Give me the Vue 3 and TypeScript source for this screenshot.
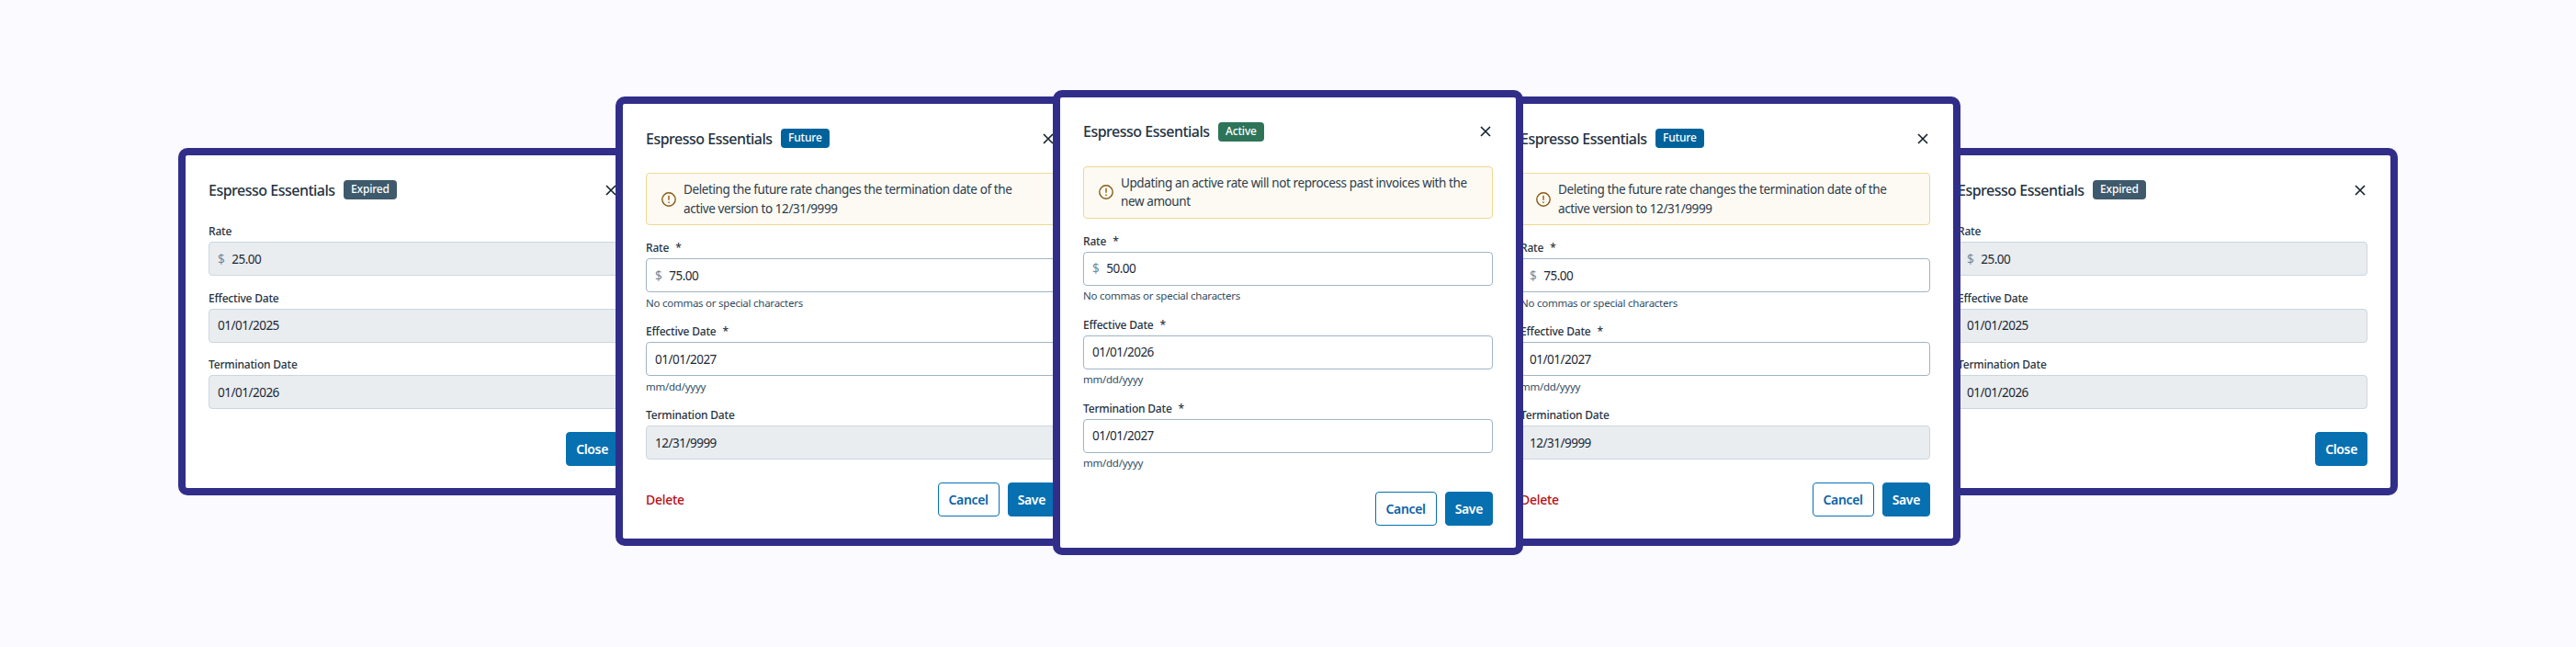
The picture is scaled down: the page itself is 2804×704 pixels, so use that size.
<script setup lang="ts">
interface Field { label: string; value: string; required?: boolean; helper?: string; prefix?: boolean; disabled?: boolean }
interface Card { status: string; tone: string; alert?: string; fields: Field[]; del?: boolean; actions: string[]; cls: string }

const future: Omit<Card, 'cls'> = {
  status: 'Future', tone: 'future',
  alert: 'Deleting the future rate changes the termination date of the active version to 12/31/9999',
  fields: [
    { label: 'Rate', value: '75.00', required: true, helper: 'No commas or special characters', prefix: true },
    { label: 'Effective Date', value: '01/01/2027', required: true, helper: 'mm/dd/yyyy' },
    { label: 'Termination Date', value: '12/31/9999', disabled: true },
  ],
  del: true, actions: ['Cancel', 'Save'],
}
const expired: Omit<Card, 'cls'> = {
  status: 'Expired', tone: 'expired',
  fields: [
    { label: 'Rate', value: '25.00', prefix: true, disabled: true },
    { label: 'Effective Date', value: '01/01/2025', disabled: true },
    { label: 'Termination Date', value: '01/01/2026', disabled: true },
  ],
  actions: ['Close'],
}
const active: Omit<Card, 'cls'> = {
  status: 'Active', tone: 'active',
  alert: 'Updating an active rate will not reprocess past invoices with the new amount',
  fields: [
    { label: 'Rate', value: '50.00', required: true, helper: 'No commas or special characters', prefix: true },
    { label: 'Effective Date', value: '01/01/2026', required: true, helper: 'mm/dd/yyyy' },
    { label: 'Termination Date', value: '01/01/2027', required: true, helper: 'mm/dd/yyyy' },
  ],
  actions: ['Cancel', 'Save'],
}
const cards: Card[] = [
  { ...expired, cls: 'z1' },
  { ...future, cls: 'z2' },
  { ...active, cls: 'z3' },
  { ...future, cls: 'z2' },
  { ...expired, cls: 'z1' },
]
</script>

<template>
  <main class="stage">
    <section v-for="(c, i) in cards" :key="i" class="card" :class="c.cls">
      <header class="head">
        <h2 class="title">Espresso Essentials</h2>
        <span class="badge" :class="c.tone">{{ c.status }}</span>
        <button class="x" type="button" aria-label="Close">
          <svg width="16" height="16" viewBox="0 0 16 16" fill="none" stroke="currentColor" stroke-width="1.6">
            <path d="M3 3l10 10M13 3L3 13" />
          </svg>
        </button>
      </header>
      <div v-if="c.alert" class="alert">
        <svg class="alert-icon" width="16" height="16" viewBox="0 0 16 16" fill="none" stroke="#8a5a12">
          <circle cx="8" cy="8" r="7.2" stroke-width="1.4" />
          <path d="M8 3.8v5" stroke-width="1.4" />
          <path d="M8 10.6v1.5" stroke-width="1.4" />
        </svg>
        <p class="alert-text">{{ c.alert }}</p>
      </div>
      <div class="form">
        <div v-for="f in c.fields" :key="f.label" class="field">
          <div class="label">{{ f.label }}<span v-if="f.required" class="req">*</span></div>
          <div class="input" :class="{ off: f.disabled }">
            <span v-if="f.prefix" class="dollar">$</span>{{ f.value }}
          </div>
          <div v-if="f.helper" class="helper">{{ f.helper }}</div>
        </div>
      </div>
      <footer class="foot">
        <button v-if="c.del" class="del" type="button">Delete</button>
        <div class="actions">
          <button
            v-for="a in c.actions" :key="a" type="button" class="btn"
            :class="a === 'Cancel' ? 'ghost' : 'solid'"
          >{{ a }}</button>
        </div>
      </footer>
    </section>
  </main>
</template>

<style>
html, body { margin: 0; background: #fafaff; }
</style>

<style scoped>
.stage {
  height: 700px;
  display: flex;
  justify-content: center;
  align-items: center;
  font-family: "Noto Sans", "Liberation Sans", sans-serif;
  color: #1f2d3a;
  background: #fafaff;
}
.card {
  box-sizing: border-box;
  width: 512px;
  flex: none;
  position: relative;
  background: #fff;
  border: 8px solid #312e8a;
  border-radius: 10px;
  padding: 24px 25px 24px;
  margin-left: -36px;
}
.card:first-child { margin-left: 0; }
.z1 { z-index: 1; }
.z2 { z-index: 2; margin-top: -1px; }
.z3 { z-index: 3; margin-top: 2px; }
.z3 .foot { margin-top: 24px; }
.head { display: flex; align-items: center; height: 27px; }
.title { margin: 0; font-size: 16px; font-weight: 500; letter-spacing: -0.5px; color: #243240; }
.badge {
  margin-left: 9.5px;
  height: 21px;
  line-height: 20px;
  padding: 0 8px;
  border-radius: 4px;
  color: #fff;
  font-size: 12px;
  font-weight: 500;
  letter-spacing: -0.2px;
}
.expired { background: #3e5a6c; }
.future { background: #00629b; }
.active { background: #2d7459; }
.x {
  margin-left: auto; margin-right: 0;
  width: 16px; height: 16px; padding: 0;
  border: 0; background: none; color: #14202b;
  display: flex;
}
.alert {
  box-sizing: border-box;
  margin-top: 24px;
  height: 57px;
  display: flex;
  align-items: center;
  gap: 8px;
  padding: 0 16px;
  background: #fdfaf3;
  border: 1px solid #efd98f;
  border-radius: 4px;
}
.alert-icon { flex: none; }
.alert-text { margin: 0; font-size: 13.5px; line-height: 20.7px; letter-spacing: -0.4px; color: #2c3c4a; }
.form { margin-top: 24px; display: flex; flex-direction: column; gap: 16.5px; }
.alert + .form { margin-top: 17px; }
.label { font-size: 12px; line-height: 15px; margin-bottom: 4px; font-weight: 500; letter-spacing: -0.2px; color: #26333f; }
.req { margin-left: 7px; }
.input {
  box-sizing: border-box;
  height: 37px;
  display: flex;
  align-items: center;
  padding: 0 9px;
  border: 1px solid #a0b4c6;
  border-radius: 4px;
  font-size: 13.5px;
  letter-spacing: -0.5px;
  color: #1c2833;
  background: #fff;
}
.input.off { background: #e9edf0; border-color: #ccd6de; }
.dollar { color: #71889c; margin-right: 8px; }
.helper { font-size: 11.5px; line-height: 14px; margin-top: 4.5px; letter-spacing: -0.25px; color: #2f4c62; }
.foot { display: flex; align-items: center; margin-top: 25px; }
.del { border: 0; background: none; padding: 0; font: inherit; font-size: 14px; font-weight: 500; letter-spacing: -0.3px; color: #b80f16; }
.actions { margin-left: auto; display: flex; gap: 9px; }
.btn {
  box-sizing: border-box;
  height: 37px;
  padding: 0 10px;
  border-radius: 4px;
  font: inherit;
  font-size: 14px;
  font-weight: 600;
  letter-spacing: -0.35px;
}
.solid { background: #0670b1; border: 1px solid #0670b1; color: #fff; }
.ghost { background: #fff; border: 1px solid #0670b1; color: #0a63a8; padding: 0 11px; }
</style>
